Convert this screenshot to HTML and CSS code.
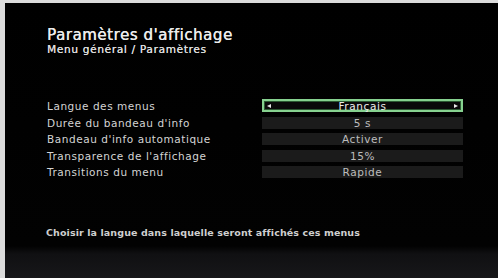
FILE: index.html
```html
<!DOCTYPE html>
<html lang="fr">
<head>
<meta charset="utf-8">
<title>Paramètres d'affichage</title>
<link rel="stylesheet" href="styles.css">
</head>
<body>
<div class="frame">
  <div class="screen">
    <header class="head">
      <h1 class="title">Paramètres d'affichage</h1>
      <p class="crumb">Menu général / Paramètres</p>
    </header>
    <ul class="menu">
      <li class="row">
        <span class="label">Langue des menus</span>
        <span class="value selected">
          <span class="arrow left"></span>
          <span class="vtext">Français</span>
          <span class="arrow right"></span>
        </span>
      </li>
      <li class="row">
        <span class="label">Durée du bandeau d'info</span>
        <span class="value"><span class="vtext">5 s</span></span>
      </li>
      <li class="row">
        <span class="label">Bandeau d'info automatique</span>
        <span class="value"><span class="vtext">Activer</span></span>
      </li>
      <li class="row">
        <span class="label">Transparence de l'affichage</span>
        <span class="value"><span class="vtext">15%</span></span>
      </li>
      <li class="row">
        <span class="label">Transitions du menu</span>
        <span class="value"><span class="vtext">Rapide</span></span>
      </li>
    </ul>
    <p class="hint">Choisir la langue dans laquelle seront affichés ces menus</p>
  </div>
</div>
</body>
</html>
```
FILE: styles.css
```css
html, body {
  margin: 0;
  padding: 0;
  background: #dcdcdc;
}
.frame {
  width: 498px;
  height: 278px;
  box-sizing: border-box;
  padding: 3px 0 0 5px;
  background: #dcdcdc;
}
.screen {
  height: 275px;
  box-sizing: border-box;
  background: linear-gradient(to bottom, #000 0px, #020202 243px, #101012 251px, #17171a 275px);
  padding: 24px 0 0 42px;
  display: flex;
  flex-direction: column;
  font-family: "DejaVu Sans", "Liberation Sans", sans-serif;
  color: #d6d6d6;
}
.head {
  margin: 0;
}
.title {
  margin: 0;
  font-size: 15px;
  font-weight: normal;
  line-height: 16px;
  color: #ececec;
  letter-spacing: 0.55px;
  text-shadow: 0.3px 0 0 #ececec;
}
.crumb {
  margin: 0;
  font-size: 10.5px;
  line-height: 12px;
  color: #dcdcdc;
  letter-spacing: 0.7px;
  text-shadow: 0.2px 0 0 #dcdcdc;
}
.menu {
  list-style: none;
  margin: 45px 0 0 0;
  padding: 0;
  display: flex;
  flex-direction: column;
  gap: 4.5px;
}
.row {
  display: flex;
  align-items: center;
  height: 12px;
}
.label {
  width: 215px;
  font-size: 10.5px;
  color: #d4d4d4;
  letter-spacing: 0.55px;
  white-space: nowrap;
}
.value {
  position: relative;
  width: 201px;
  height: 12px;
  box-sizing: border-box;
  background: #1b1b1b;
  display: flex;
  align-items: center;
  justify-content: center;
  font-size: 10.5px;
  color: #bdbdbd;
  letter-spacing: 0.6px;
}
.value.selected {
  border: 2px solid #86d18f;
  box-shadow: inset 0 0 0 1px #2c5a33;
  background: #0a0a0a;
  color: #ececec;
  height: 13px;
  margin-top: -1px;
}
.vtext {
  line-height: 12px;
}
.arrow {
  position: absolute;
  top: 50%;
  margin-top: -2px;
  width: 0;
  height: 0;
  border-top: 2px solid transparent;
  border-bottom: 2px solid transparent;
}
.arrow.left {
  left: 3px;
  border-right: 4px solid #e8e8e8;
}
.arrow.right {
  right: 3px;
  border-left: 4px solid #e8e8e8;
}
.hint {
  margin: 49px 0 0 -1px;
  font-size: 9.5px;
  font-weight: bold;
  color: #cfcfcf;
  letter-spacing: 0.1px;
}
```
